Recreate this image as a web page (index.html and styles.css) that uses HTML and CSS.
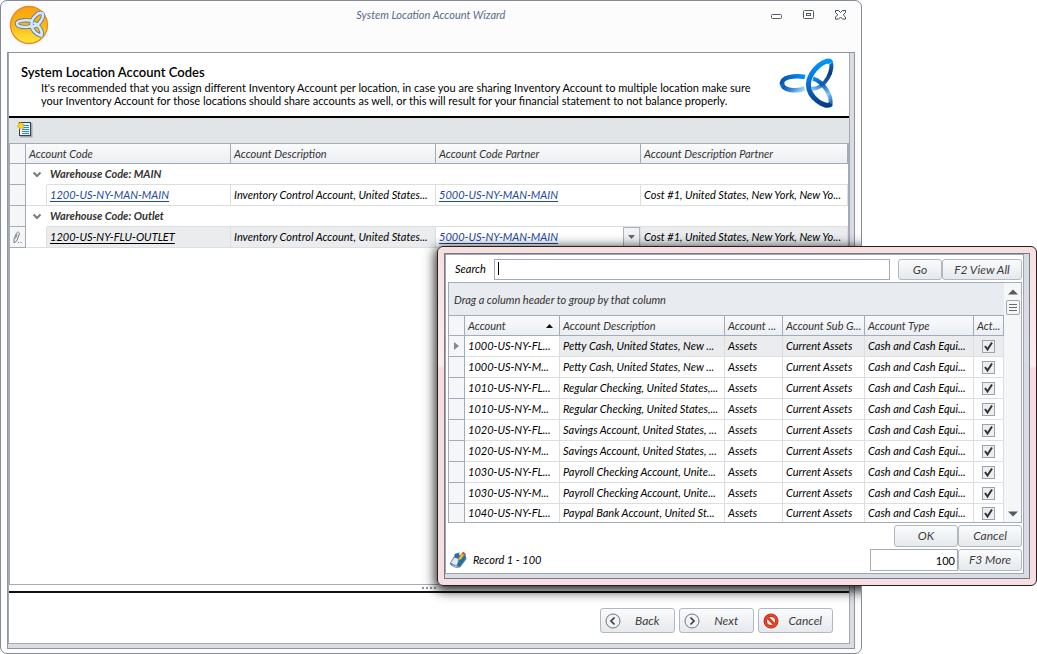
FILE: index.html
```html
<!DOCTYPE html>
<html lang="en">
<head>
<meta charset="utf-8">
<title>System Location Account Wizard</title>
<link rel="stylesheet" href="styles.css">
</head>
<body>
<svg width="0" height="0" class="defs" aria-hidden="true">
  <defs>
    <linearGradient id="gold" x1="0" y1="0" x2="0" y2="1"><stop offset="0" stop-color="#f9a20c"/><stop offset=".5" stop-color="#fdb515"/><stop offset="1" stop-color="#ffe83a"/></linearGradient>
    <linearGradient id="loopLeft" gradientUnits="userSpaceOnUse" x1="2" y1="17" x2="24" y2="34"><stop offset="0" stop-color="#0090fb"/><stop offset=".35" stop-color="#0b5db5"/><stop offset=".6" stop-color="#3585d2"/><stop offset="1" stop-color="#a9dcff"/></linearGradient>
    <linearGradient id="leftTop" gradientUnits="userSpaceOnUse" x1="2" y1="0" x2="26" y2="0"><stop offset="0" stop-color="#0856ab"/><stop offset="1" stop-color="#0094ff"/></linearGradient>
    <linearGradient id="spine" gradientUnits="userSpaceOnUse" x1="0" y1="2" x2="0" y2="50"><stop offset="0" stop-color="#0095ff"/><stop offset=".5" stop-color="#0a6fd6"/><stop offset="1" stop-color="#06367a"/></linearGradient>
    <linearGradient id="upper" gradientUnits="userSpaceOnUse" x1="52" y1="4" x2="36" y2="32"><stop offset="0" stop-color="#0c6fcb"/><stop offset=".3" stop-color="#073a78"/><stop offset=".7" stop-color="#1464bd"/><stop offset="1" stop-color="#73bdf8"/></linearGradient>
    <linearGradient id="lower" gradientUnits="userSpaceOnUse" x1="34" y1="20" x2="53" y2="48"><stop offset="0" stop-color="#0a95ff"/><stop offset=".3" stop-color="#0a57ad"/><stop offset=".65" stop-color="#7cc6ff"/><stop offset="1" stop-color="#0a4a98"/></linearGradient>
  </defs>
</svg>

<main class="window">
  <header class="titlebar">
    <svg class="app-icon" width="40" height="40" viewBox="0 0 40 40" aria-hidden="true">
      <circle cx="20" cy="20" r="18.5" fill="url(#gold)" stroke="#e9862b" stroke-width="1.3"/>
      <g fill="none" stroke="#5a7a94" stroke-width="4.200"><path id="mark" d="M24 16.500C19 14.500 8 15 8 18.500S17 23 22.500 21M33.500 8.500C30 6 22 13 22.500 19.500S28 29.500 32.500 31M33.500 8.500C35.500 12 30 21.500 23.500 21.500M24.500 17.500C30 20 34 26 32.500 31"/></g>
      <use href="#mark" fill="none" stroke="#d3e9fb" stroke-width="2.600"/>
    </svg>
    <span class="window-title">System Location Account Wizard</span>
    <div class="window-controls">
      <button class="ctl" aria-label="Minimize"><svg width="12" height="12" viewBox="0 0 12 12"><rect x=".5" y="5.5" width="10" height="4" rx="1" fill="#fff" stroke="#555b66"/></svg></button>
      <button class="ctl" aria-label="Maximize"><svg width="12" height="12" viewBox="0 0 12 12"><rect x=".5" y="1.500" width="10" height="8" rx="1" fill="#fff" stroke="#555b66"/><rect x="3.500" y="4.500" width="4" height="2" fill="none" stroke="#555b66"/></svg></button>
      <button class="ctl" aria-label="Close"><svg width="12" height="12" viewBox="1 0 12 12"><path d="M1.500 1.500h3l2 2 2-2h3v2L9.200 5.800l2.300 2.300v2h-3L6.500 8l-2 2.100h-3v-2l2.300-2.300L1.500 3.500z" fill="#fff" stroke="#454b56"/></svg></button>
    </div>
  </header>

  <div class="frame">
    <div class="pane">
      <section class="intro">
        <div>
          <h1>System Location Account Codes</h1>
          <p>It's recommended that you assign different Inventory Account per location, in case you are sharing Inventory Account to multiple location make sure<br>your Inventory Account for those locations should share accounts as well, or this will result for your financial statement to not balance properly.</p>
        </div>
        <svg class="logo" width="56" height="52" viewBox="0 0 56 52" aria-hidden="true">
          <g fill="none" stroke-width="4.500">
            <path d="M3 25C3 33 18 34 27 30" stroke="url(#loopLeft)"/>
            <path d="M3 26C2 19 16 17 26 19" stroke="url(#leftTop)"/>
            <path d="M51 3C56 10 47 31 32 31" stroke="url(#upper)" stroke-width="4"/>
            <path d="M34 20.500C45 24 53 38 51.500 47" stroke="url(#lower)" stroke-width="4"/>
            <path d="M52.500 5C48 -2 29 12 28.500 26S46 50 51.500 48.500" stroke="#fff" stroke-width="7"/>
            <path d="M52 5C49 -2 30 12 29.500 26S47 51 52 46" stroke="url(#spine)" stroke-width="5"/>
          </g>
        </svg>
      </section>

      <div class="toolbar">
        <button class="tool" aria-label="New record">
          <svg width="18" height="18" viewBox="0 0 18 18"><path d="M4 16.500h11.500V3" fill="none" stroke="#a4a8ac" stroke-width="2"/><rect x="3.500" y="2.500" width="11" height="13" fill="#e4f3ff" stroke="#35424e"/><path d="M6 5.500h7M6 7.500h7M6 9.500h7M6 11.500h7M6 13.500h7" stroke="#2e8ad0"/><path d="M4.500 2l1.200 2 2.300.2-1.200 2 1 2.100-2.300-.3-1.500 1.500-.8-2L1 6.500l1.700-1.200L2.500 3l2 .6z" fill="#ffd91c" stroke="#e0a50a" stroke-width=".7"/></svg>
        </button>
      </div>

      <div class="grid-area">
        <table class="grid accounts">
          <colgroup><col class="c-ind"><col class="c-indent"><col class="c-code"><col class="c-text"><col class="c-text"><col></colgroup>
          <thead>
            <tr><th class="ind"></th><th colspan="2">Account Code</th><th>Account Description</th><th>Account Code Partner</th><th>Account Description Partner</th></tr>
          </thead>
          <tbody>
            <tr class="group"><td class="ind"></td><td class="indent open"><svg width="10" height="8" viewBox="0 0 10 8"><path d="M1.500 1.500L5 5l3.500-3.500" fill="none" stroke="#747b85" stroke-width="2"/></svg></td><td colspan="4">Warehouse Code: MAIN</td></tr>
            <tr><td class="ind"></td><td class="indent"></td><td><a href="#">1200-US-NY-MAN-MAIN</a></td><td>Inventory Control Account, United States...</td><td><a href="#">5000-US-NY-MAN-MAIN</a></td><td>Cost #1, United States, New York, New Yo...</td></tr>
            <tr class="group"><td class="ind"></td><td class="indent open"><svg width="10" height="8" viewBox="0 0 10 8"><path d="M1.500 1.500L5 5l3.500-3.500" fill="none" stroke="#747b85" stroke-width="2"/></svg></td><td colspan="4">Warehouse Code: Outlet</td></tr>
            <tr class="current"><td class="ind"><svg width="11" height="14" viewBox="0 0 11 14"><path d="M2 9L4.500 3c.8-1.600 3.400-.8 2.800 1L5 10.500 2 13zM5 4.500L3.500 8.500" fill="none" stroke="#777d87"/><path d="M6 12.500h1M8.500 12.500h1" stroke="#777d87"/></svg></td><td class="indent"></td><td><a class="active" href="#">1200-US-NY-FLU-OUTLET</a></td><td>Inventory Control Account, United States...</td>
              <td class="editing"><div class="combo"><a href="#">5000-US-NY-MAN-MAIN</a><button aria-label="Open list"><svg width="8" height="4" viewBox="0 0 8 4"><path d="M0 0h7L3.500 4z" fill="#60666f"/></svg></button></div></td><td>Cost #1, United States, New York, New Yo...</td></tr>
          </tbody>
        </table>
      </div>

      <div class="splitter"><svg width="16" height="4" viewBox="0 0 16 4"><path d="M1 1h2v2H1zM5 1h2v2H5zM9 1h2v2H9zM13 1h2v2h-2z" fill="#8f959e"/></svg></div>

      <footer class="actions">
        <button class="btn wide"><svg width="16" height="16" viewBox="0 0 16 16"><circle cx="8" cy="8" r="7" fill="#f1f2f3" stroke="#70757c"/><path d="M9.500 4.500L6 8l3.500 3.500" fill="none" stroke="#33383f" stroke-width="1.600"/></svg><span>Back</span></button>
        <button class="btn wide"><svg width="16" height="16" viewBox="0 0 16 16"><circle cx="8" cy="8" r="7" fill="#f1f2f3" stroke="#70757c"/><path d="M6.500 4.500L10 8l-3.500 3.500" fill="none" stroke="#33383f" stroke-width="1.600"/></svg><span>Next</span></button>
        <button class="btn wide"><svg width="16" height="16" viewBox="0 0 16 16"><circle cx="8" cy="8" r="5.800" fill="#f4f4f6" stroke="#8d3328" stroke-width="3.400"/><path d="M4 4l8 8" stroke="#8d3328" stroke-width="2.600"/><circle cx="8" cy="8" r="5.800" fill="none" stroke="#f2401f" stroke-width="2.200"/><path d="M4 4l8 8" stroke="#f2401f" stroke-width="1.800"/></svg><span>Cancel</span></button>
      </footer>
    </div>
  </div>
  <div class="popup-shade" aria-hidden="true"></div>
</main>

<section class="popup" role="dialog" aria-label="Account lookup">
  <div class="popup-frame">
    <div class="popup-body">
      <div class="search-row">
        <label for="search">Search</label>
        <div class="search-box"><input id="search" type="text"><i class="caret"></i></div>
        <div class="pair"><button class="btn go">Go</button><button class="btn view">F2 View All</button></div>
      </div>

      <div class="lookup">
        <div class="lookup-main">
          <div class="group-hint">Drag a column header to group by that column</div>
          <table class="grid results">
            <colgroup><col class="r-ind"><col class="r-acct"><col><col class="r-grp"><col class="r-sub"><col class="r-type"><col class="r-act"></colgroup>
            <thead><tr><th class="ind"></th><th><div class="sorted">Account<svg width="8" height="4" viewBox="0 0 8 4"><path d="M0 4h7L3.500 0z" fill="#111"/></svg></div></th><th>Account Description</th><th>Account ...</th><th>Account Sub G...</th><th>Account Type</th><th>Act...</th></tr></thead>
            <tbody>
              <tr class="current"><td class="ind"><svg width="5" height="8" viewBox="0 0 5 8"><path d="M0 0l5 4-5 4z" fill="#858b95"/></svg></td><td class="focus">1000-US-NY-FL...</td><td>Petty Cash, United States, New ...</td><td>Assets</td><td>Current Assets</td><td>Cash and Cash Equi...</td><td class="tick"><input type="checkbox" checked aria-label="Active"></td></tr>
              <tr><td class="ind"></td><td>1000-US-NY-M...</td><td>Petty Cash, United States, New ...</td><td>Assets</td><td>Current Assets</td><td>Cash and Cash Equi...</td><td class="tick"><input type="checkbox" checked aria-label="Active"></td></tr>
              <tr><td class="ind"></td><td>1010-US-NY-FL...</td><td>Regular Checking, United States,...</td><td>Assets</td><td>Current Assets</td><td>Cash and Cash Equi...</td><td class="tick"><input type="checkbox" checked aria-label="Active"></td></tr>
              <tr><td class="ind"></td><td>1010-US-NY-M...</td><td>Regular Checking, United States,...</td><td>Assets</td><td>Current Assets</td><td>Cash and Cash Equi...</td><td class="tick"><input type="checkbox" checked aria-label="Active"></td></tr>
              <tr><td class="ind"></td><td>1020-US-NY-FL...</td><td>Savings Account, United States, ...</td><td>Assets</td><td>Current Assets</td><td>Cash and Cash Equi...</td><td class="tick"><input type="checkbox" checked aria-label="Active"></td></tr>
              <tr><td class="ind"></td><td>1020-US-NY-M...</td><td>Savings Account, United States, ...</td><td>Assets</td><td>Current Assets</td><td>Cash and Cash Equi...</td><td class="tick"><input type="checkbox" checked aria-label="Active"></td></tr>
              <tr><td class="ind"></td><td>1030-US-NY-FL...</td><td>Payroll Checking Account, Unite...</td><td>Assets</td><td>Current Assets</td><td>Cash and Cash Equi...</td><td class="tick"><input type="checkbox" checked aria-label="Active"></td></tr>
              <tr><td class="ind"></td><td>1030-US-NY-M...</td><td>Payroll Checking Account, Unite...</td><td>Assets</td><td>Current Assets</td><td>Cash and Cash Equi...</td><td class="tick"><input type="checkbox" checked aria-label="Active"></td></tr>
              <tr class="last"><td class="ind"></td><td>1040-US-NY-FL...</td><td>Paypal Bank Account, United St...</td><td>Assets</td><td>Current Assets</td><td>Cash and Cash Equi...</td><td class="tick"><input type="checkbox" checked aria-label="Active"></td></tr>
            </tbody>
          </table>
        </div>
        <div class="scrollbar">
          <svg width="10" height="6" viewBox="0 0 10 6"><path d="M0 5.500h10L5 .5z" fill="#555a60"/></svg>
          <div class="thumb"></div>
          <svg class="down" width="10" height="6" viewBox="0 0 10 6"><path d="M0 .5h10L5 5.500z" fill="#555a60"/></svg>
        </div>
      </div>

      <div class="popup-foot">
        <div class="record">
          <svg width="18" height="18" viewBox="0 0 18 18" aria-hidden="true"><path d="M1 13l4-7 11-3 1 5-6 8z" fill="#5b88b8" stroke="#3c5878" stroke-width=".7"/><path d="M1.500 12L5.500 6l5 2-3 7z" fill="#dfeaf5" stroke="#6f88a3" stroke-width=".6"/><path d="M8 14.500L11 8l5-3v3l-5.500 7.500z" fill="#1470b8"/><path d="M5.500 3l5-1.500-1 6-4-1z" fill="#2b6ca7"/><path d="M9 10l1-3 3.500-5.500 2.200 1.300-3.500 5.500z" fill="#f5c838" stroke="#8a6a1d" stroke-width=".6"/><path d="M13 2.500l1-1.500 2.400 1.300-1 1.600z" fill="#d9432c"/><path d="M2 14l5 2.500 3.500-.5" fill="none" stroke="#7d8b9a"/></svg>
          <span>Record 1 - 100</span>
        </div>
        <div class="foot-grid">
          <button class="btn ok">OK</button><button class="btn">Cancel</button>
          <input class="count" type="text" value="100" aria-label="Records per page"><button class="btn">F3 More</button>
        </div>
      </div>
    </div>
  </div>
</section>
</body>
</html>
```
FILE: styles.css
```css
* { box-sizing: border-box; }
body {
  margin: 0;
  position: relative;
  min-height: 100vh;
  background: #fff;
  font: italic 11px/20px Lato, "Liberation Sans", sans-serif;
  color: #000;
  overflow: hidden;
}
button, input { font: inherit; color: inherit; margin: 0; }
svg { display: block; flex: none; }
.defs { position: absolute; }

.window {
  position: relative;
  display: flex;
  flex-direction: column;
  width: 83.1%;
  min-height: 100vh;
  padding: 0 6px 4px;
  border: 1px solid #858a94;
  border-radius: 7px;
  background: #fcfcfd;
  overflow: hidden;
}
.titlebar {
  display: grid;
  grid-template-columns: 1fr auto 1fr;
  height: 51px;
}
.app-icon { margin: 4px 0 0 2px; }
.window-title { margin-top: 4px; color: #5a6b8c; }
.window-controls {
  display: flex;
  justify-content: flex-end;
  align-items: flex-start;
  gap: 20px;
  padding: 8px 8px 0 0;
}
.ctl, .tool { padding: 0; border: 0; background: none; }

.frame {
  flex: 1;
  display: flex;
  padding: 0 4px 4px 0;
  border: 1px solid #8f949e;
  background: #d9dde3;
}
.pane {
  flex: 1;
  display: flex;
  flex-direction: column;
  min-width: 0;
  border: 1px solid #a2a8b4;
  border-top: 0;
  background: #fff;
}
.intro {
  display: flex;
  justify-content: space-between;
  height: 65px;
  padding: 5px 14px 0 12px;
  border-bottom: 2px solid #000;
  font-style: normal;
}
.intro h1 { margin: 5px 0 0; font-size: 13px; line-height: 18px; font-weight: 600; }
.intro p { margin: 0 0 0 20px; line-height: 13px; white-space: nowrap; }
.toolbar { height: 25px; padding: 2px 0 0 7px; background: #e1e5e8; }

.grid-area {
  flex: 1;
  border-left: 1px solid #a4acb6;
  border-right: 1px solid #a4acb6;
  border-bottom: 1px solid #a4acb6;
}
.grid { width: 100%; table-layout: fixed; border-collapse: separate; border-spacing: 0; }
.grid th, .grid td {
  height: 21px;
  padding: 0 0 0 3px;
  border: solid #dcdee2;
  border-width: 0 1px 1px 0;
  text-align: left;
  font-weight: 400;
  white-space: nowrap;
  overflow: hidden;
}
.grid th { border-color: #a3abb9; background: linear-gradient(#fafbfc, #ebeef2); color: #333; }
.grid .ind { padding: 0; border-color: #a3abb9; background: #f5f6f8; }
.grid .ind svg { margin: auto; }
.grid .current td:not(.ind) { background: #ebecee; }
.grid.accounts th { border-top-width: 1px; line-height: 19px; }
.c-ind { width: 16px; }
.c-indent { width: 21px; }
.c-code { width: 184px; }
.c-text { width: 205px; }
.accounts .indent, .grid.accounts .current .indent { padding: 0; background: #fff; }
.accounts .open { border: 0; }
.accounts .open svg { margin: auto; }
.accounts .group td:last-child { border-right: 0; font-weight: 700; color: #333; }
a { color: #1c48a0; text-decoration: underline; text-underline-offset: 2px; }
a.active { color: #000; }
.grid.accounts .current .editing { padding: 0 0 0 3px; background: #fff; }
.combo { display: flex; justify-content: space-between; height: 20px; }
.combo button {
  display: grid;
  place-items: center;
  width: 17px;
  padding: 0;
  border: 1px solid #adb3bd;
  background: #f0f2f5;
}
.splitter { display: flex; justify-content: center; height: 8px; padding-top: 1px; border-bottom: 2px solid #111; }
.actions { display: flex; justify-content: flex-end; align-items: flex-start; gap: 4px; height: 50px; padding: 15px 16px 0 0; }

.btn {
  display: flex;
  align-items: center;
  justify-content: center;
  padding: 0;
  border: 1px solid #b2b8c0;
  border-radius: 3px;
  background: linear-gradient(#fafbfc, #e6e9ed);
  color: #3c3c3c;
  font-size: 12px;
  white-space: nowrap;
}
.btn.wide { width: 75px; height: 25px; padding-left: 4px; }
.wide span { flex: 1; text-align: center; }

.popup-shade {
  position: absolute;
  left: 436px;
  top: 245px;
  width: 600px;
  height: 340px;
  border-radius: 6px;
  box-shadow: 0 3px 12px 2px rgba(0, 0, 0, .85);
}
.popup {
  position: absolute;
  left: 437px;
  right: 0;
  top: 246px;
  padding: 6px;
  border: 1px solid #222;
  border-radius: 6px;
  background: linear-gradient(#f7dfe0, #fdecec 35%, #f6dcde 36%, #f7dfe1);
}
.popup-frame { padding: 0 5px 4px 0; border: 1px solid #777b85; background: #d9dde3; }
.popup-body { padding: 4px 1px 2px 2px; border: 1px solid #9fa5b0; background: #fff; }
.search-row { display: flex; height: 23px; padding-left: 7px; }
.search-row label { width: 39px; }
.search-box { position: relative; flex: 1; height: 21px; }
.search-box input { width: 100%; height: 21px; padding: 0 5px; border: 1px solid #a3abb9; background: #fff; outline: 0; }
.caret { position: absolute; left: 4px; top: 3px; width: 1px; height: 13px; background: #000; }
.pair { display: flex; height: 21px; margin-left: 8px; }
.go { width: 44px; }
.view { width: 80px; }
.lookup { display: flex; border: 1px solid #a3abb9; }
.lookup-main { flex: 1; min-width: 0; }
.group-hint { height: 33px; padding: 7px 5px 5px; border-bottom: 1px solid #a3abb9; background: #e8ebef; line-height: 20px; color: #333; }
.r-ind { width: 16px; }
.r-acct { width: 95px; }
.r-grp { width: 58px; }
.r-sub { width: 82px; }
.r-type { width: 109px; }
.r-act { width: 30px; }
.grid.results th { height: 20px; line-height: 19px; }
.results .last td { height: 18px; line-height: 18px; border-bottom: 0; }
.grid.results .current .focus { background: #fff; }
.sorted { display: flex; justify-content: space-between; align-items: center; padding-right: 5px; }
.grid .tick { padding: 0; }
.tick input {
  appearance: none;
  display: block;
  width: 13px;
  height: 13px;
  margin: 0 auto;
  border: 1px solid #9aa3b1;
  background: #eceef0 url("data:image/svg+xml,%3Csvg xmlns='http://www.w3.org/2000/svg' viewBox='0 0 11 11'%3E%3Cpath d='M2 5l2.500 3.500L9 1.500' fill='none' stroke='%23333' stroke-width='2'/%3E%3C/svg%3E");
}
.scrollbar { display: flex; flex-direction: column; align-items: center; width: 17px; padding: 6px 0 5px; background: #f5f6f7; }
.scrollbar .thumb {
  width: 14px;
  height: 15px;
  margin-top: 5px;
  border: 1px solid #a2a5aa;
  border-radius: 2px;
  background: repeating-linear-gradient(#666b73 0 1px, #f6f6f7 1px 3px) center / 8px 7px no-repeat #f6f6f7;
}
.scrollbar .down { margin-top: auto; }
.popup-foot { display: flex; justify-content: space-between; align-items: flex-end; padding-top: 2px; }
.record { display: flex; align-items: center; gap: 6px; height: 22px; padding-left: 1px; }
.foot-grid { display: grid; grid-template-columns: 88px 64px; row-gap: 2px; }
.foot-grid .btn, .count { height: 22px; }
.ok { width: 64px; justify-self: end; }
.count { width: 88px; padding: 0 2px; border: 1px solid #a3abb9; background: #fff; text-align: right; font-style: normal; }
```
